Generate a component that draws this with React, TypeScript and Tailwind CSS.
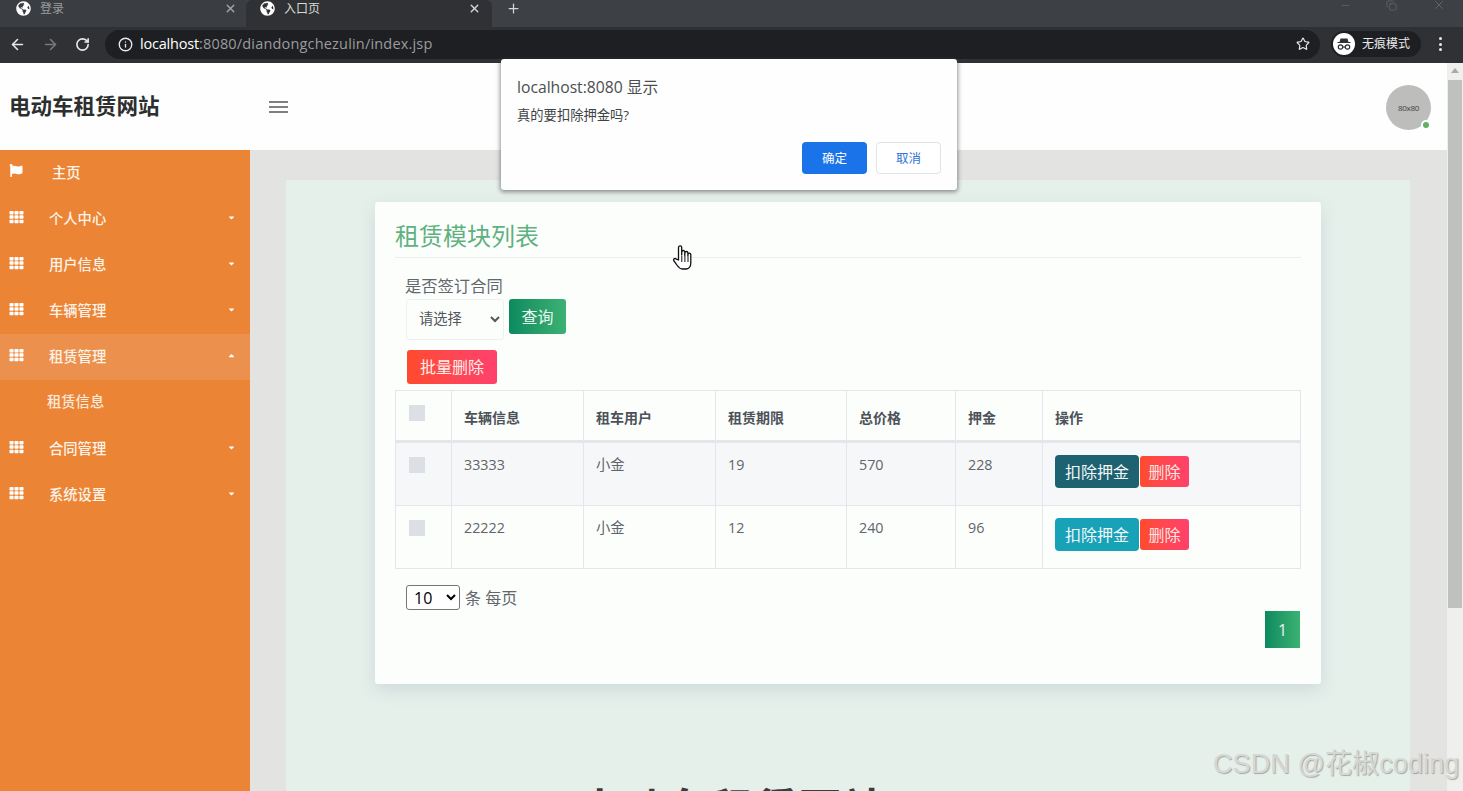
import React from "react";
import { ArrowLeft, ArrowRight, RotateCw, Info, Star, Plus, X, Minus, Copy } from "lucide-react";
import { FaGlobeAmericas, FaFlag, FaTh, FaCaretDown, FaCaretUp } from "react-icons/fa";

const FONT = "[font-family:'Open_Sans','Noto_Sans_CJK_SC',sans-serif]";

function Tab({ title, active }: { title: string; active?: boolean }) {
  return (
    <div className={`w-[246px] h-full flex items-center pb-[11px] ${active ? "bg-[#303134] rounded-t-md pl-[14px] pr-[11px]" : "bg-[#3a3d41] pl-[16px] pr-[9px]"}`}>
      <FaGlobeAmericas className="w-[15px] h-[15px] text-white shrink-0" />
      <span className={`ml-[9px] pt-[2px] text-[12px] flex-1 ${active ? "text-[#d9d9d4]" : "text-[#9b9c9e]"}`}>{title}</span>
      <X className={`w-[13px] h-[13px] ${active ? "text-[#d5d6d7]" : "text-[#a4a5a7]"}`} strokeWidth={2.5} />
    </div>
  );
}

function Chrome() {
  return (
    <div className="shrink-0">
      <div className="h-[27px] bg-[#3d4044] flex items-center">
        <Tab title="登录" />
        <Tab title="入口页" active />
        <Plus className="ml-[14px] mb-[11px] w-[15px] h-[15px] text-[#d5d6d7]" />
        <div className="ml-auto flex items-center gap-[35px] pr-[17px] pb-[17px] text-[#7d8083]">
          <Minus className="w-[11px] h-[11px]" strokeWidth={1} />
          <Copy className="w-[11px] h-[11px]" strokeWidth={1} />
          <X className="w-[14px] h-[14px]" strokeWidth={1} />
        </div>
      </div>
      <div className="h-[36px] bg-[#303134] flex items-center pb-[2px]">
        <ArrowLeft className="ml-[9px] w-[17px] h-[17px] text-[#e8e9ea]" strokeWidth={2.2} />
        <ArrowRight className="ml-[16px] w-[17px] h-[17px] text-[#77797c]" strokeWidth={2.2} />
        <RotateCw className="ml-[16px] w-[15px] h-[15px] text-[#e8e9ea]" strokeWidth={2.6} />
        <div className="ml-[15px] w-[1215px] h-[29px] rounded-full bg-[#1e1f22] flex items-center pl-[13px] pr-[10px]">
          <Info className="w-[15px] h-[15px] text-[#e8e9ea]" strokeWidth={2.2} />
          <span className="ml-[7px] text-[14.5px] text-[#9b9c9e] [font-family:'Open_Sans',sans-serif] tracking-[0.18px]">
            <span className="text-white tracking-[-0.2px]">localhost</span>:8080/diandongchezulin/index.jsp
          </span>
          <Star className="ml-auto w-[14px] h-[14px] text-[#e8e9ea]" strokeWidth={2} />
        </div>
        <div className="ml-[11px] w-[90px] h-[26px] rounded-full bg-[#1e1f22] flex items-center pl-[2px]">
          <div className="w-[22px] h-[22px] rounded-full bg-white flex items-center justify-center">
            <svg viewBox="0 0 22 22" className="w-[22px] h-[22px]">
              <path d="M7.5 5.5h7l1 3.5h2v1H4.500v-1h2z" fill="#303134" />
              <circle cx="7.500" cy="14" r="2.200" fill="none" stroke="#303134" strokeWidth="1.200" />
              <circle cx="14.500" cy="14" r="2.200" fill="none" stroke="#303134" strokeWidth="1.200" />
              <path d="M9.700 14h2.600" stroke="#303134" strokeWidth="1.200" />
            </svg>
          </div>
          <span className="ml-[7px] text-[12px] text-[#e8e9ea]">无痕模式</span>
        </div>
        <div className="ml-[18px] flex flex-col gap-[2.500px]">
          <span className="w-[3px] h-[3px] rounded-full bg-[#e8e9ea]" />
          <span className="w-[3px] h-[3px] rounded-full bg-[#e8e9ea]" />
          <span className="w-[3px] h-[3px] rounded-full bg-[#e8e9ea]" />
        </div>
      </div>
    </div>
  );
}

function NavItem({ label, open, flag }: { label: string; open?: boolean; flag?: boolean }) {
  return (
    <div className={`h-[46px] flex items-center pl-[9px] pr-[14px] text-[14.300px] font-medium text-[#fdf3ea] ${open ? "bg-[#ec914d]" : ""}`}>
      {flag ? <FaFlag className="w-[14px] h-[13px] mb-[6px] text-white" /> : <FaTh className="w-[15px] h-[14px] mb-[4px] text-white" />}
      <span className={`mb-[1px] ${flag ? "ml-[29px]" : "ml-[25px]"}`}>{label}</span>
      {!flag && (open ? <FaCaretUp className="ml-auto w-[9px] h-[9px] mb-[4px] text-white" /> : <FaCaretDown className="ml-auto w-[9px] h-[9px] mb-[4px] text-white" />)}
    </div>
  );
}

function Sidebar() {
  return (
    <div className="w-[250px] shrink-0 bg-[#eb8535]">
      <NavItem label="主页" flag />
      <NavItem label="个人中心" />
      <NavItem label="用户信息" />
      <NavItem label="车辆管理" />
      <NavItem label="租赁管理" open />
      <div className="h-[46px] pl-[47px] pb-[3px] flex items-center text-[14.300px] font-medium text-[#fbeadc]">租赁信息</div>
      <NavItem label="合同管理" />
      <NavItem label="系统设置" />
    </div>
  );
}

const th = "border border-[#e3e6ea] border-b-[3px] px-[12px] pt-[4px] text-left align-middle text-[14px] font-bold text-[#4c5258]";
const td = "border border-[#e3e6ea] px-[12px] pt-[11px] align-top text-[14.300px] text-[#5f656b]";

function Check() {
  return <div className="ml-[1px] w-[16px] h-[16px] bg-[#dce0e5]" />;
}

function Row({ a, b, c, d, e, dark, stripe }: { a: string; b: string; c: string; d: string; e: string; dark?: boolean; stripe?: boolean }) {
  return (
    <tr className={`${stripe ? "bg-[#f6f7f8] h-[64px]" : "h-[63px]"}`}>
      <td className={td}><div className="pt-[3px]"><Check /></div></td>
      <td className={td}>{a}</td>
      <td className={td}>{b}</td>
      <td className={td}>{c}</td>
      <td className={td}>{d}</td>
      <td className={td}>{e}</td>
      <td className={`${td} !pt-[12px]`}>
        <div className="flex items-center">
          <div className={`w-[84px] h-[33px] rounded-[4px] flex items-center justify-center text-[16px] text-[#f3f7f8] ${dark ? "bg-[#1d6270]" : "bg-[#17a2b8]"}`}>扣除押金</div>
          <div className="ml-[1px] w-[49px] h-[31px] rounded-[3px] flex items-center justify-center text-[16px] text-[#fbe6e2] bg-gradient-to-r from-[#ff4b2b] to-[#ff416c]">删除</div>
        </div>
      </td>
    </tr>
  );
}

function Card() {
  return (
    <div className="w-[946px] h-[482px] mx-auto rounded-[3px] bg-[#fcfefc] shadow-[0_6px_18px_rgba(160,175,190,0.35)] px-[20px] pt-[18px]">
      <div className="h-[38px] border-b border-[#ebeeec] text-[24px] leading-[32px] text-[#5fb17f]">租赁模块列表</div>
      <div className="pl-[10px] pt-[16px] text-[16.300px] leading-[24px] text-[#62676c]">是否签订合同</div>
      <div className="flex items-start pl-[11px] h-[51px] mt-[1px]">
        <select className="w-[98px] h-[41px] pl-[8px] pb-[2px] border border-[#eef1f0] rounded-[3px] bg-[#fcfefc] text-[14.300px] text-[#52575c]">
          <option>请选择</option>
        </select>
        <div className="ml-[5px] w-[57px] h-[35px] rounded-[3px] flex items-center justify-center text-[16px] text-[#eaf7f0] bg-gradient-to-r from-[#0a8a5f] to-[#3bb273]">查询</div>
      </div>
      <div className="pl-[12px]">
        <div className="w-[90px] h-[34px] rounded-[3px] flex items-center justify-center text-[16px] text-[#fdeee9] bg-gradient-to-r from-[#ff4b2b] to-[#ff416c]">批量删除</div>
      </div>
      <table className="mt-[6px] w-[906px] table-fixed border-collapse">
        <colgroup>
          <col className="w-[56px]" />
          <col className="w-[132px]" />
          <col className="w-[132px]" />
          <col className="w-[131px]" />
          <col className="w-[109px]" />
          <col className="w-[87px]" />
          <col />
        </colgroup>
        <thead>
          <tr className="h-[51px]">
            <th className={`${th} !align-top !pt-[14px]`}><Check /></th>
            <th className={th}>车辆信息</th>
            <th className={th}>租车用户</th>
            <th className={th}>租赁期限</th>
            <th className={th}>总价格</th>
            <th className={th}>押金</th>
            <th className={th}>操作</th>
          </tr>
        </thead>
        <tbody>
          <Row a="33333" b="小金" c="19" d="570" e="228" dark stripe />
          <Row a="22222" b="小金" c="12" d="240" e="96" />
        </tbody>
      </table>
      <div className="flex items-center pl-[11px] mt-[16px] text-[16px] text-[#62676c]">
        <select className="w-[54px] h-[25px] pl-[3px] border border-[#767676] rounded-[3px] bg-white text-[16px] text-black">
          <option>10</option>
        </select>
        <span className="ml-[5px]">条 每页</span>
      </div>
      <div className="flex justify-end pr-[1px] mt-[1px]">
        <div className="w-[35px] h-[37px] flex items-center justify-center text-[16px] text-[#e8f6ee] bg-gradient-to-r from-[#0a8a5f] to-[#3bb273]">1</div>
      </div>
    </div>
  );
}

function Dialog() {
  return (
    <div className="absolute left-[501px] top-[59px] w-[456px] h-[131px] bg-[#fdfefd] rounded-[3px] shadow-[0_1px_4px_1px_rgba(60,60,60,0.55)] px-[16px] pt-[16px]">
      <div className="text-[15.700px] leading-[24px] text-[#4b4e50]">localhost:8080 显示</div>
      <div className="mt-[6px] text-[13.300px] leading-[20px] text-[#404346]">真的要扣除押金吗?</div>
      <div className="flex justify-end gap-[9px] mt-[17px]">
        <div className="w-[65px] h-[32px] pt-[2px] rounded-[4px] bg-[#1a73e8] flex items-center justify-center text-[12.500px] text-white">确定</div>
        <div className="w-[65px] h-[32px] pt-[2px] rounded-[4px] border border-[#dfe3ea] bg-white flex items-center justify-center text-[12.500px] text-[#2f74d8]">取消</div>
      </div>
    </div>
  );
}

function Hand() {
  return (
    <svg viewBox="0 0 20 28" className="absolute left-[672px] top-[244px] w-[20px] h-[28px]">
      <path
        d="M6.500 16V3.500a1.600 1.600 0 0 1 3.200 0V11l.1-3a1.500 1.500 0 0 1 3 0v3.500l.1-2.500a1.500 1.500 0 0 1 3 0v3l.1-1.500a1.400 1.400 0 0 1 2.800 0V19c0 3.500-2 6-5 6h-3.500c-2.500 0-3.600-1.500-5-3.500L2 17c-1.200-1.800.8-3.300 2.300-1.900z"
        fill="#fff"
        stroke="#111"
        strokeWidth="1.300"
        strokeLinejoin="round"
      />
      <path d="M9.800 12v6M12.900 12v6M16 12.500V18" stroke="#111" strokeWidth="1" />
    </svg>
  );
}

export default function App() {
  return (
    <div className={`relative w-[1463px] h-[791px] overflow-hidden flex flex-col bg-[#e3e3e1] ${FONT}`}>
      <Chrome />
      <div className="flex-1 flex min-h-0">
        <div className="flex-1 flex flex-col min-w-0">
          <header className="h-[87px] shrink-0 bg-[#fdfefd] flex items-center pl-[9px] pr-[16px]">
            <div className="w-[260px] text-[21.500px] font-bold text-[#2c2e30]">电动车租赁网站</div>
            <div className="flex flex-col gap-[3px]">
              <span className="w-[19px] h-[2px] bg-[#808080]" />
              <span className="w-[19px] h-[2px] bg-[#808080]" />
              <span className="w-[19px] h-[2px] bg-[#808080]" />
            </div>
            <div className="ml-auto mt-[2px] relative w-[45px] h-[45px] rounded-full bg-[#bdbebc] flex items-center justify-center text-[8px] tracking-[-0.3px] text-[#3f3f3f]">
              80x80
              <span className="absolute right-[0px] bottom-[0px] w-[10px] h-[10px] rounded-full bg-[#5fb25f] border-[2px] border-white" />
            </div>
          </header>
          <div className="flex-1 flex min-h-0">
            <Sidebar />
            <main className="flex-1 min-w-0 pt-[30px] pl-[36px] pr-[37px]">
              <div className="h-full bg-[#e6f0eb] pt-[22px] overflow-hidden">
                <div className="pl-[89px]">
                  <div className="w-[946px]"><Card /></div>
                </div>
                <div className="mt-[101px] pl-[292px] text-[44px] leading-[48px] font-bold text-[#3a3c3e] whitespace-nowrap">电动车租赁网站</div>
              </div>
            </main>
          </div>
        </div>
        <div className="w-[16px] shrink-0 bg-[#eff0ee] flex flex-col items-center">
          <div className="mt-[5px] w-0 h-0 border-l-[4px] border-r-[4px] border-b-[5px] border-l-transparent border-r-transparent border-b-[#a8aaa8]" />
          <div className="mt-[7px] w-[14px] h-[528px] bg-[#bfc1bf]" />
        </div>
      </div>
      <Dialog />
      <Hand />
      <div className="absolute left-[1213px] top-[746px] text-[27px] leading-[36px] text-[#d6d8d6] [font-family:'Liberation_Sans','Noto_Sans_CJK_SC',sans-serif] [text-shadow:1px_1px_1px_rgba(120,120,120,0.6)] whitespace-nowrap tracking-[0.1px]">CSDN @花椒coding</div>
    </div>
  );
}
